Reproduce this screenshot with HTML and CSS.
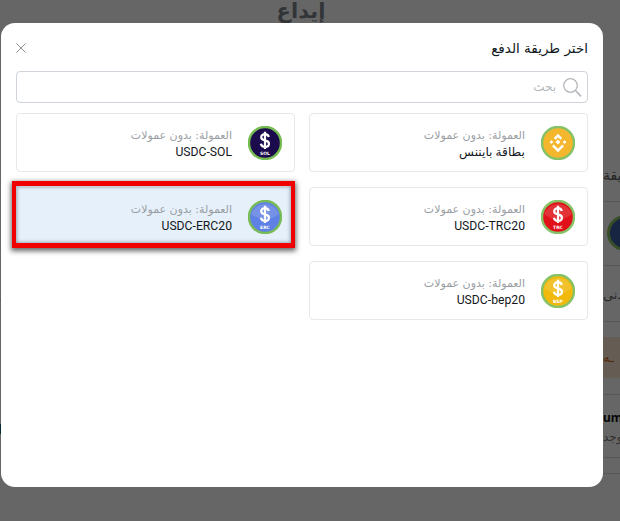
FILE: index.html
```html
<!DOCTYPE html>
<html lang="ar" dir="rtl">
<head>
<meta charset="utf-8">
<title>إيداع</title>
<link rel="stylesheet" href="styles.css">
</head>
<body>
<svg class="defs" width="0" height="0" aria-hidden="true">
  <symbol id="dollar" viewBox="0 0 34 34">
    <path d="M21.6 12.2c-.5-2.2-2.2-3.5-4.6-3.500-2.700 0-4.600 1.500-4.600 3.700 0 2.100 1.500 3.100 4.600 3.800 3.200.7 4.800 1.800 4.800 4 0 2.300-2 3.800-4.800 3.800-2.600 0-4.500-1.400-5-3.700M17 5.800v21" fill="none" stroke="#fff" stroke-width="2.700"/>
  </symbol>
  <symbol id="gloss" viewBox="0 0 34 34">
    <path d="M3 14Q17 25 31 14A14.800 14.800 0 0 0 3 14z" fill="#fff" fill-opacity=".14"/>
  </symbol>
</svg>

<div class="page">
  <h1 class="page-title">إيداع</h1>
  <div class="page-rows">
    <div class="bg-label">طريقة</div>
    <div class="bg-row bg-coin-row"><span class="bg-coin"></span></div>
    <div class="bg-row bg-mid">الأدنى</div>
    <div class="bg-row bg-gap"><div class="bg-note">ـه</div></div>
    <div class="bg-row bg-info"><b>um</b><span>يوجد</span></div>
    <div class="bg-row bg-last"></div>
    <div class="bg-row bg-end"></div>
  </div>
  <i class="bg-left-line"></i>
  <i class="bg-left-mark"></i>
</div>

<div class="backdrop"></div>

<section class="modal">
  <header class="modal-head">
    <h2 class="modal-title">اختر طريقة الدفع</h2>
    <svg class="close" viewBox="0 0 10 10" width="10" height="10"><path d="M.5.5l9 9M9.500.5l-9 9" stroke="#8a8f94" stroke-width="1" fill="none"/></svg>
  </header>

  <div class="search">
    <svg class="search-icon" viewBox="0 0 20 20" width="20" height="20"><circle cx="8.500" cy="8.500" r="6.800" fill="none" stroke="#b4b8bc" stroke-width="1.300"/><path d="M13.500 13.500l5.500 5.800" stroke="#b4b8bc" stroke-width="1.700" fill="none"/></svg>
    <span class="search-text">بحث</span>
  </div>

  <div class="methods">
    <div class="method">
      <svg class="coin" viewBox="0 0 34 34" width="34" height="34">
        <circle cx="17" cy="17" r="16" fill="#f4b62c" stroke="#86c267" stroke-width="2.400"/>
        <path d="M17 8.500l3.600 3.600-1.500 1.500-2.100-2.100-2.100 2.100-1.500-1.500zM9.800 15.500l1.600-1.600 1.600 1.600-1.600 1.600zM14.900 15.500l2.100-2.100 2.100 2.100-2.100 2.100zM21 15.500l1.600-1.600 1.600 1.600-1.600 1.600zM13.400 17.500l3.600 3.600 3.600-3.600 1.500 1.500-5.100 5.100-5.100-5.100z" transform="translate(17 17) scale(1.180) translate(-17 -16.300)" fill="#fff"/>
      </svg>
      <div class="method-text">
        <span class="fee">العمولة: بدون عمولات</span>
        <span class="name">بطاقة بايننس</span>
      </div>
    </div>

    <div class="method">
      <svg class="coin" viewBox="0 0 34 34" width="34" height="34">
        <circle cx="17" cy="17" r="16" fill="#1b0b4d" stroke="#75bb4f" stroke-width="2.400"/>
        <use href="#dollar" width="28" height="28" x="3" y="1"/>
        <text class="coin-label" x="17" y="28.500">SOL</text>
      </svg>
      <div class="method-text">
        <span class="fee">العمولة: بدون عمولات</span>
        <span class="name">USDC-SOL</span>
      </div>
    </div>

    <div class="method">
      <svg class="coin" viewBox="0 0 34 34" width="34" height="34">
        <circle cx="17" cy="17" r="16" fill="#e01119" stroke="#86c267" stroke-width="2.400"/>
        <use href="#gloss" width="34" height="34"/>
        <use href="#dollar" width="28" height="28" x="3" y="1"/>
        <text class="coin-label" x="17" y="28.500">TRC</text>
      </svg>
      <div class="method-text">
        <span class="fee">العمولة: بدون عمولات</span>
        <span class="name">USDC-TRC20</span>
      </div>
    </div>

    <div class="method selected">
      <svg class="coin" viewBox="0 0 34 34" width="34" height="34">
        <circle cx="17" cy="17" r="16" fill="#5f80e4" stroke="#78bb57" stroke-width="2.400"/>
        <use href="#gloss" width="34" height="34"/>
        <use href="#dollar" width="28" height="28" x="3" y="1"/>
        <text class="coin-label" x="17" y="28.500">ERC</text>
      </svg>
      <div class="method-text">
        <span class="fee">العمولة: بدون عمولات</span>
        <span class="name">USDC-ERC20</span>
      </div>
    </div>

    <div class="method">
      <svg class="coin" viewBox="0 0 34 34" width="34" height="34">
        <circle cx="17" cy="17" r="16" fill="#f0b90b" stroke="#86c267" stroke-width="2.400"/>
        <use href="#gloss" width="34" height="34"/>
        <use href="#dollar" width="28" height="28" x="3" y="1"/>
        <text class="coin-label" x="17" y="28.500">BEP</text>
      </svg>
      <div class="method-text">
        <span class="fee">العمولة: بدون عمولات</span>
        <span class="name">USDC-bep20</span>
      </div>
    </div>
  </div>
</section>
</body>
</html>
```

FILE: styles.css
```css
* { box-sizing: border-box; }

html, body {
  margin: 0;
  height: 521px;
  overflow: hidden;
}

body {
  position: relative;
  width: 620px;
  background: #fff;
  font-family: "Noto Sans", "DejaVu Sans", sans-serif;
  color: #111;
}

.defs { position: absolute; }

.page { height: 521px; }

.page-title {
  margin: 0;
  height: 23px;
  text-align: center;
  padding-left: 10px;
  padding-right: 28px;
  font: 700 21px/22px "DejaVu Sans", sans-serif;
  color: #7d848c;
  overflow: hidden;
}

.page-rows {
  position: absolute;
  top: 165px;
  left: 603px;
  width: 17px;
  overflow: hidden;
  white-space: nowrap;
  direction: ltr;
  color: #555;
}

.bg-label { height: 36px; font-size: 14px; line-height: 20px; }
.bg-row { border-top: 1px solid #ddd; }
.bg-coin-row { height: 64px; padding: 13px 0 0 4px; }
.bg-coin {
  display: block;
  width: 36px;
  height: 36px;
  border-radius: 50%;
  background: #3a5aa6;
  border: 3px solid #8cc264;
}
.bg-mid { height: 56px; font-size: 13px; line-height: 56px; color: #666; }
.bg-gap { height: 73px; padding-top: 15px; }
.bg-note { height: 41px; background: #fde7cf; color: #d2691e; font-size: 13px; line-height: 41px; }
.bg-info { height: 63px; color: #111; }
.bg-info b { display: block; margin-top: 15px; font-size: 12px; line-height: 16px; }
.bg-info span { display: block; margin-top: 2px; font-size: 12px; line-height: 18px; color: #777; }
.bg-last { height: 16px; }
.bg-end { height: 30px; }

.bg-left-line { position: absolute; left: 0; top: 300px; width: 1px; height: 1px; background: #ccc; }
.bg-left-mark { position: absolute; left: 0; top: 424px; width: 1px; height: 10px; background: #1b6a80; }

.backdrop {
  position: absolute;
  inset: 0;
  background: rgba(0, 0, 0, .6);
}

.modal {
  position: absolute;
  left: 1px;
  top: 23px;
  width: 602px;
  height: 464px;
  padding: 15px 15px 0;
  background: #fff;
  border-radius: 14px;
}

.modal-head {
  display: flex;
  justify-content: space-between;
  align-items: center;
  height: 20px;
  margin-bottom: 13px;
}

.modal-title {
  margin: 0;
  font: 400 13.500px/20px "DejaVu Sans", sans-serif;
  color: #101820;
}

.search {
  display: flex;
  align-items: center;
  gap: 6px;
  height: 32px;
  padding: 0 5px;
  border: 1px solid #ced4da;
  border-radius: 4px;
  margin-bottom: 10px;
}

.search-text {
  font: 400 12px/1 "DejaVu Sans", sans-serif;
  color: #b4b8bc;
}

.methods {
  display: grid;
  grid-template-columns: 279px 279px;
  grid-auto-rows: 59px;
  gap: 15px 14px;
}

.method {
  position: relative;
  display: flex;
  align-items: center;
  gap: 16px;
  padding: 0 12px 0 0;
  border: 1px solid #e6e8ea;
  border-radius: 4px;
  background: #fff;
}

.method.selected {
  background: #e6f0fa;
}

.method.selected::after {
  content: "";
  position: absolute;
  top: -7px;
  right: -1px;
  bottom: -3px;
  left: -5px;
  border: solid #f00000;
  border-width: 5px 4px;
  box-shadow: 0 2px 5px 1px rgba(0, 0, 0, .6), inset 0 0 4px rgba(20, 40, 70, .55);
  pointer-events: none;
}

.method-text {
  display: flex;
  flex-direction: column;
  margin-top: 3px;
}

.fee {
  font: 400 11px/16px "DejaVu Sans", sans-serif;
  color: #9a9ea3;
}

.name {
  font: 400 12.200px/17px Roboto, "DejaVu Sans", sans-serif;
  color: #14181c;
}

.coin-label {
  font: 700 4.500px "DejaVu Sans", sans-serif;
  fill: #fff;
  text-anchor: middle;
  direction: ltr;
}
```
